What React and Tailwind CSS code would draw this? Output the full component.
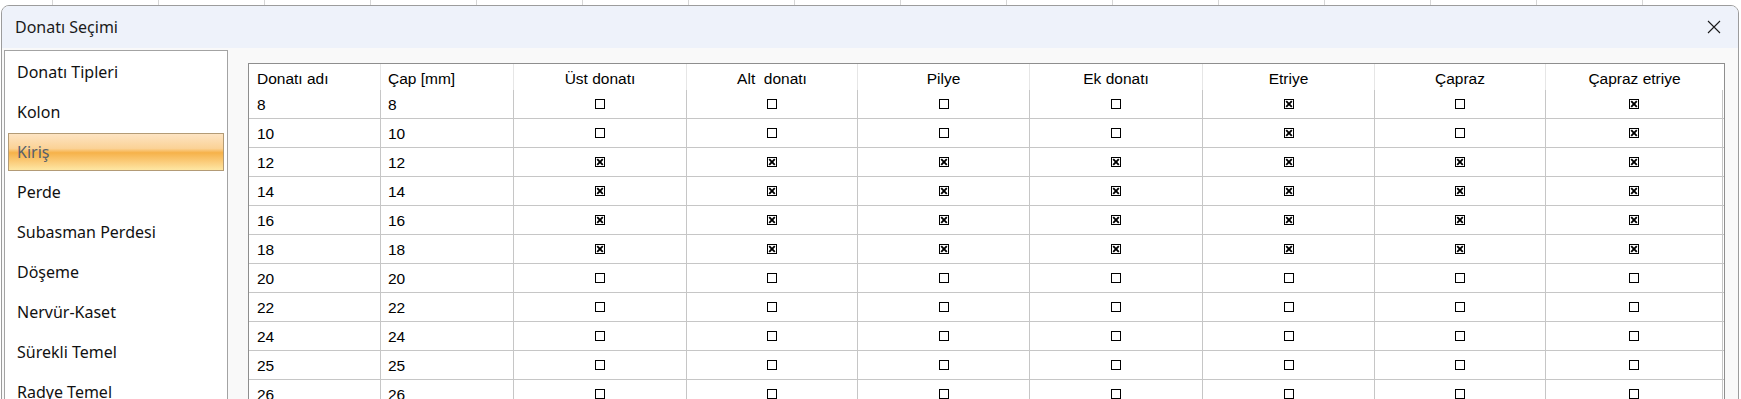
import React from 'react';

const categories = [
    'Donatı Tipleri',
    'Kolon',
    'Kiriş',
    'Perde',
    'Subasman Perdesi',
    'Döşeme',
    'Nervür-Kaset',
    'Sürekli Temel',
    'Radye Temel',
];

const columns = [
    { label: 'Donatı adı', w: 'w-[132px]', align: 'left' },
    { label: 'Çap [mm]', w: 'w-[133px]', align: 'left' },
    { label: 'Üst donatı', w: 'w-[173px]' },
    { label: 'Alt\u00a0\u00a0donatı', w: 'w-[171px]' },
    { label: 'Pilye', w: 'w-[172px]' },
    { label: 'Ek donatı', w: 'w-[173px]' },
    { label: 'Etriye', w: 'w-[172px]' },
    { label: 'Çapraz', w: 'w-[171px]' },
    { label: 'Çapraz etriye', w: 'w-[177px]' },
];

const none = [0, 0, 0, 0, 0, 0, 0];
const all = [1, 1, 1, 1, 1, 1, 1];
const stirrup = [0, 0, 0, 0, 1, 0, 1];

const rows = [
    { name: '8', checks: stirrup },
    { name: '10', checks: stirrup },
    { name: '12', checks: all },
    { name: '14', checks: all },
    { name: '16', checks: all },
    { name: '18', checks: all },
    { name: '20', checks: none },
    { name: '22', checks: none },
    { name: '24', checks: none },
    { name: '25', checks: none },
    { name: '26', checks: none },
];

const CheckMark = ({ on }) => (
    <svg width="10" height="10" viewBox="0 0 10 10" className="block">
        <rect x="0.5" y="0.5" width="9" height="9" fill="white" stroke="#000" strokeWidth="1" />
        {on ? <path d="M2.2 2.2 L7.8 7.8 M7.8 2.2 L2.2 7.8" stroke="#000" strokeWidth="1.9" /> : null}
    </svg>
);

const CloseIcon = () => (
    <svg width="14" height="14" viewBox="0 0 14 14" className="block">
        <path d="M1 1 L13 13 M13 1 L1 13" stroke="#1a1a1a" strokeWidth="1.1" />
    </svg>
);

const App = () => {
    return (
        <div className="relative w-[1741px] h-[399px] overflow-hidden bg-white font-['Noto_Sans',sans-serif]">
            {/* application behind the dialog */}
            <div className="flex h-full">
                {Array.from({ length: 17 }).map((_, i) => (
                    <div key={i} className="w-[106px] shrink-0 border-r border-[#d6d6d6] first:w-[53px]" />
                ))}
            </div>

            <div className="absolute left-px top-[5px] w-[1738px] h-[400px] flex flex-col rounded-t-[8px] border border-[#9c9c9c] bg-[#f9f9f9] overflow-hidden">
                <div className="h-[42px] shrink-0 flex items-center justify-between bg-[#eef2fa] pl-[13px] pr-[17px]">
                    <span className="text-[16px] text-[#1b1b1b]">Donatı Seçimi</span>
                    <CloseIcon />
                </div>

                <div className="flex flex-1 items-start">
                    <div className="ml-[2px] mt-[2px] w-[224px] h-[360px] shrink-0 border border-[#a3a3a3] bg-white pt-px">
                        {categories.map((cat) =>
                            cat === 'Kiriş' ? (
                                <div key={cat} className="h-[40px] py-px px-[3px]">
                                    <div className="h-[38px] flex items-center pl-[8px] border border-[#b39b76] bg-[linear-gradient(to_bottom,#fde4c3_0%,#fbd296_40%,#f6b24a_52%,#fbcd7c_78%,#fee7a4_100%)] text-[16px] text-[#56606c]">
                                        {cat}
                                    </div>
                                </div>
                            ) : (
                                <div key={cat} className="h-[40px] flex items-center pl-[12px] text-[16px] text-[#111]">
                                    {cat}
                                </div>
                            )
                        )}
                    </div>

                    <div className="ml-[20px] mt-[15px] w-[1477px] shrink-0 border border-[#8e8e8e] bg-white font-['Liberation_Sans',Arial,sans-serif] text-[15.5px] leading-[17px] text-black">
                        <div className="flex h-[26px]">
                            {columns.map((col, i) => (
                                <div
                                    key={col.label}
                                    className={`${col.w} shrink-0 flex items-end pb-[3px] ${i < columns.length - 1 ? 'border-r border-[#e6e6e6]' : ''} ${col.align === 'left' ? (i === 0 ? 'pl-[8px]' : 'pl-[7px]') : 'justify-center'}`}
                                >
                                    {col.label}
                                </div>
                            ))}
                        </div>
                        {rows.map((row) => (
                            <div key={row.name} className="flex h-[29px] border-b border-[#c6c6c6]">
                                <div className="w-[132px] shrink-0 flex items-center pl-[8px] border-r border-[#c6c6c6]">{row.name}</div>
                                <div className="w-[133px] shrink-0 flex items-center pl-[7px] border-r border-[#c6c6c6]">{row.name}</div>
                                {row.checks.map((c, j) => (
                                    <div
                                        key={j}
                                        className={`${columns[j + 2].w} shrink-0 flex items-center justify-center border-r border-[#c6c6c6]`}
                                    >
                                        <CheckMark on={c === 1} />
                                    </div>
                                ))}
                            </div>
                        ))}
                    </div>
                </div>
            </div>
        </div>
    );
};

export default App;
